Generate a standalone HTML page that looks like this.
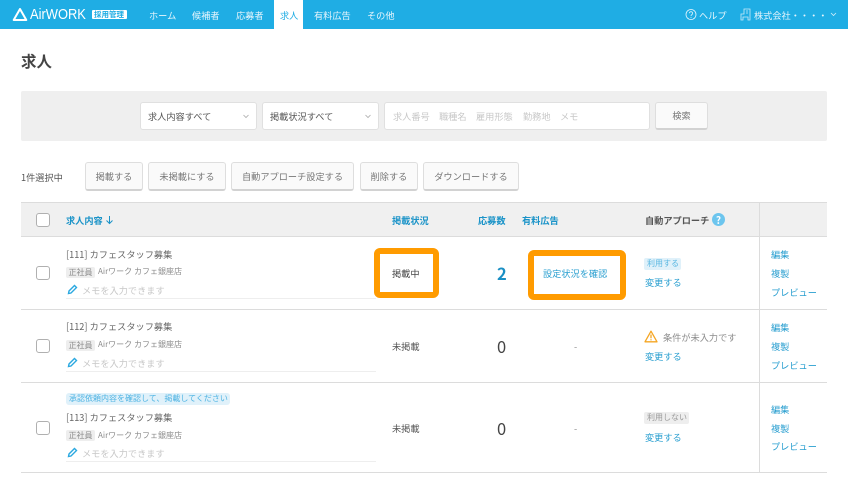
<!DOCTYPE html>
<html lang="ja"><head><meta charset="utf-8"><title>求人</title>
<style>
*{box-sizing:border-box}
html,body{margin:0;padding:0;background:#fff}
body{width:848px;height:494px;position:relative;overflow:hidden;font-family:"Noto Sans CJK JP","Liberation Sans",sans-serif;color:#555}
.t{position:absolute;white-space:nowrap;line-height:14px;font-size:9.2px}
.r{position:absolute}
.n{color:#e6f5fc;top:8px}
.b{position:absolute;height:29px;top:162px;background:#fafafa;border:1px solid #dedede;border-bottom:2px solid #d2d2d2;border-radius:3px;font-size:9.2px;color:#777;text-align:center;line-height:27px;white-space:nowrap}
.s{position:absolute;top:102px;height:28px;background:#fff;border:1px solid #e0e0e0;border-radius:3px}
.cb{position:absolute;left:36px;width:14px;height:14px;background:#fff;border:1px solid #b0b0b0;border-radius:3px}
.l{color:#2a9fd0}
.g{color:#8c8c8c}
.tag{position:absolute;left:66px;width:29px;height:11px;background:#eee;border-radius:2px;color:#8c8c8c;font-size:8px;line-height:11px;text-align:center;white-space:nowrap}
.pl{position:absolute;left:66px;width:310px;height:1px;background:#eee}
.hl{position:absolute;left:21px;width:806px;height:1px;background:#dcdcdc}
.o{position:absolute;border:6px solid #ff9b00;border-radius:6px;background:#fff}
</style></head><body>
<div class="r" style="left:0;top:0;width:848px;height:29px;background:#1fade4"></div>
<svg class="r" style="left:12px;top:7px" width="17" height="15" viewBox="0 0 17 15"><path d="M8 2 L14.300 13 H1.700 Z" fill="none" stroke="#fff" stroke-width="2" stroke-linejoin="round"/></svg>
<div class="t" style="left:30px;top:7px;color:#fff;font-family:'Liberation Sans',sans-serif;font-size:15px;line-height:15px;transform:scaleX(.86);transform-origin:left center">AirWORK</div>
<div class="r" style="left:92px;top:10px;width:35px;height:9px;background:#fff;border-radius:1px"></div>
<div class="t" style="left:94px;top:8px;color:#1fade4;font-size:7.500px;font-weight:bold">採用管理</div>
<div class="t n" style="left:149px">ホーム</div>
<div class="t n" style="left:192px">候補者</div>
<div class="t n" style="left:236px">応募者</div>
<div class="r" style="left:274px;top:0;width:29px;height:29px;background:#fff"></div>
<div class="t" style="left:280px;top:8px;color:#1fade4">求人</div>
<div class="t n" style="left:314px">有料広告</div>
<div class="t n" style="left:367px">その他</div>
<svg class="r" style="left:685px;top:8px" width="12" height="13" viewBox="0 0 12 13"><circle cx="6" cy="6.500" r="5" fill="none" stroke="#e6f5fc" stroke-width=".8"/><path d="M4.400 5.200a1.600 1.600 0 1 1 2.500 1.400c-.6.4-.9.7-.9 1.400" fill="none" stroke="#e6f5fc" stroke-width=".8"/><circle cx="6" cy="9.400" r=".5" fill="#e6f5fc"/></svg>
<div class="t n" style="left:699px">ヘルプ</div>
<svg class="r" style="left:740px;top:8px" width="11" height="13" viewBox="0 0 11 13"><path d="M4 1H10V12H8V9H3V12H1V6H4Z M6 3H8M6 5H8" fill="none" stroke="#cdeaf8" stroke-width=".8"/></svg>
<div class="t n" style="left:754px">株式会社・・・・</div>
<svg class="r" style="left:830px;top:12px" width="7" height="5" viewBox="0 0 7 5"><path d="M1 1L3.500 3.500L6 1" fill="none" stroke="#d5effa" stroke-width=".8"/></svg>

<div class="t" style="left:21px;top:51px;font-size:15.500px;line-height:20px;font-weight:bold;color:#444">求人</div>

<div class="r" style="left:21px;top:91px;width:806px;height:50px;background:#efefef;border-radius:2px"></div>
<div class="s" style="left:140px;width:117px"></div>
<div class="t" style="left:148px;top:109px">求人内容すべて</div>
<svg class="r" style="left:242px;top:114px" width="8" height="5" viewBox="0 0 8 5"><path d="M1.500 1L4 3.500L6.500 1" fill="none" stroke="#aaa" stroke-width=".8"/></svg>
<div class="s" style="left:262px;width:117px"></div>
<div class="t" style="left:270px;top:109px">掲載状況すべて</div>
<svg class="r" style="left:364px;top:114px" width="8" height="5" viewBox="0 0 8 5"><path d="M1.500 1L4 3.500L6.500 1" fill="none" stroke="#aaa" stroke-width=".8"/></svg>
<div class="s" style="left:384px;width:266px"></div>
<div class="t" style="left:393px;top:109px;color:#c8c8c8">求人番号</div>
<div class="t" style="left:439px;top:109px;color:#c8c8c8">職種名</div>
<div class="t" style="left:476px;top:109px;color:#c8c8c8">雇用形態</div>
<div class="t" style="left:523px;top:109px;color:#c8c8c8">勤務地</div>
<div class="t" style="left:560px;top:109px;color:#c8c8c8">メモ</div>
<div class="b" style="left:655px;width:53px;top:102px;height:28px;line-height:25px">検索</div>

<div class="t" style="left:21px;top:170px;color:#555">1件選択中</div>
<div class="b" style="left:85px;width:58px">掲載する</div>
<div class="b" style="left:148px;width:78px">未掲載にする</div>
<div class="b" style="left:231px;width:123px">自動アプローチ設定する</div>
<div class="b" style="left:360px;width:58px">削除する</div>
<div class="b" style="left:423px;width:96px">ダウンロードする</div>

<div class="r" style="left:21px;top:202px;width:806px;height:35px;background:#f0f0f0;border-top:1px solid #dcdcdc;border-bottom:1px solid #dcdcdc"></div>
<div class="r" style="left:759px;top:203px;width:1px;height:269px;background:#dcdcdc"></div>
<div class="hl" style="top:309px"></div>
<div class="hl" style="top:382px"></div>
<div class="hl" style="top:472px"></div>

<div class="cb" style="top:213px"></div>
<div class="t" style="left:66px;top:213px;color:#1a93c8;font-weight:bold">求人内容</div>
<svg class="r" style="left:105px;top:215px" width="9" height="10" viewBox="0 0 9 10"><path d="M4.500 1V8.500M1.500 5.500L4.500 8.500L7.500 5.500" fill="none" stroke="#1a93c8" stroke-width="1"/></svg>
<div class="t" style="left:392px;top:213px;color:#1a93c8;font-weight:bold">掲載状況</div>
<div class="t" style="left:478px;top:213px;color:#1a93c8;font-weight:bold">応募数</div>
<div class="t" style="left:522px;top:213px;color:#1a93c8;font-weight:bold">有料広告</div>
<div class="t" style="left:645px;top:213px;color:#555;font-weight:bold">自動アプローチ</div>
<div class="r" style="left:712px;top:213px;width:13px;height:13px;border-radius:50%;background:#6cc5ee;color:#fff;font-size:10px;line-height:13px;text-align:center;font-weight:bold">?</div>

<!-- row 1 -->
<div class="cb" style="top:266px"></div>
<div class="t" style="left:66px;top:247px;color:#666">[111] カフェスタッフ募集</div>
<div class="tag" style="top:267px">正社員</div>
<div class="t g" style="left:98px;top:265px;font-size:8px">Airワーク カフェ銀座店</div>
<svg class="r" style="left:67px;top:284px" width="11" height="11" viewBox="0 0 11 11"><path d="M1.500 9.500L2 7L7.500 1.500L9.500 3.500L4 9Z" fill="none" stroke="#2aa8e0" stroke-width="1.400"/></svg>
<div class="t" style="left:82px;top:283px;color:#c8c8c8">メモを入力できます</div>
<div class="pl" style="top:298px"></div>
<div class="o" style="left:374px;top:248px;width:65px;height:50px"></div>
<div class="t" style="left:392px;top:266px;color:#444">掲載中</div>
<div class="t" style="left:497px;top:264px;color:#1a8fc4;font-size:16.500px;line-height:18px;font-weight:bold">2</div>
<div class="o" style="left:528px;top:250px;width:98px;height:50px"></div>
<div class="t l" style="left:543px;top:266px">設定状況を確認</div>
<div class="r" style="left:644px;top:258px;width:37px;height:12px;background:#e0f1fa;border-radius:2px"></div>
<div class="t" style="left:647px;top:257px;font-size:8px;color:#5bb8e2">利用する</div>
<div class="t l" style="left:645px;top:275px">変更する</div>
<div class="t l" style="left:771px;top:247px">編集</div>
<div class="t l" style="left:771px;top:266px">複製</div>
<div class="t l" style="left:771px;top:285px">プレビュー</div>

<!-- row 2 -->
<div class="cb" style="top:339px"></div>
<div class="t" style="left:66px;top:319px;color:#666">[112] カフェスタッフ募集</div>
<div class="tag" style="top:340px">正社員</div>
<div class="t g" style="left:98px;top:338px;font-size:8px">Airワーク カフェ銀座店</div>
<svg class="r" style="left:67px;top:357px" width="11" height="11" viewBox="0 0 11 11"><path d="M1.500 9.500L2 7L7.500 1.500L9.500 3.500L4 9Z" fill="none" stroke="#2aa8e0" stroke-width="1.400"/></svg>
<div class="t" style="left:82px;top:356px;color:#c8c8c8">メモを入力できます</div>
<div class="pl" style="top:371px"></div>
<div class="t" style="left:392px;top:339px;color:#555">未掲載</div>
<div class="t" style="left:497px;top:337px;color:#444;font-size:16.500px;line-height:18px">0</div>
<div class="t g" style="left:574px;top:339px">-</div>
<svg class="r" style="left:644px;top:330px" width="14" height="13" viewBox="0 0 14 13"><path d="M7 1.200L13 11.800H1Z" fill="none" stroke="#f5a623" stroke-width="1.300" stroke-linejoin="round"/><path d="M7 4.500V8.200M7 9.300V10.400" stroke="#f5a623" stroke-width="1.300"/></svg>
<div class="t g" style="left:663px;top:330px">条件が未入力です</div>
<div class="t l" style="left:645px;top:349px">変更する</div>
<div class="t l" style="left:771px;top:320px">編集</div>
<div class="t l" style="left:771px;top:339px">複製</div>
<div class="t l" style="left:771px;top:358px">プレビュー</div>

<!-- row 3 -->
<div class="r" style="left:66px;top:393px;width:164px;height:12px;background:#e0f1fa;border-radius:3px"></div>
<div class="t" style="left:69px;top:392px;font-size:8px;color:#4fb4e3">承認依頼内容を確認して、掲載してください</div>
<div class="cb" style="top:421px"></div>
<div class="t" style="left:66px;top:410px;color:#666">[113] カフェスタッフ募集</div>
<div class="tag" style="top:430px">正社員</div>
<div class="t g" style="left:98px;top:429px;font-size:8px">Airワーク カフェ銀座店</div>
<svg class="r" style="left:67px;top:447px" width="11" height="11" viewBox="0 0 11 11"><path d="M1.500 9.500L2 7L7.500 1.500L9.500 3.500L4 9Z" fill="none" stroke="#2aa8e0" stroke-width="1.400"/></svg>
<div class="t" style="left:82px;top:446px;color:#c8c8c8">メモを入力できます</div>
<div class="pl" style="top:461px"></div>
<div class="t" style="left:392px;top:421px;color:#555">未掲載</div>
<div class="t" style="left:497px;top:419px;color:#444;font-size:16.500px;line-height:18px">0</div>
<div class="t g" style="left:574px;top:421px">-</div>
<div class="r" style="left:644px;top:412px;width:45px;height:12px;background:#eee;border-radius:2px"></div>
<div class="t" style="left:647px;top:411px;font-size:8px;color:#999">利用しない</div>
<div class="t l" style="left:645px;top:430px">変更する</div>
<div class="t l" style="left:771px;top:402px">編集</div>
<div class="t l" style="left:771px;top:421px">複製</div>
<div class="t l" style="left:771px;top:439px">プレビュー</div>
</body></html>
